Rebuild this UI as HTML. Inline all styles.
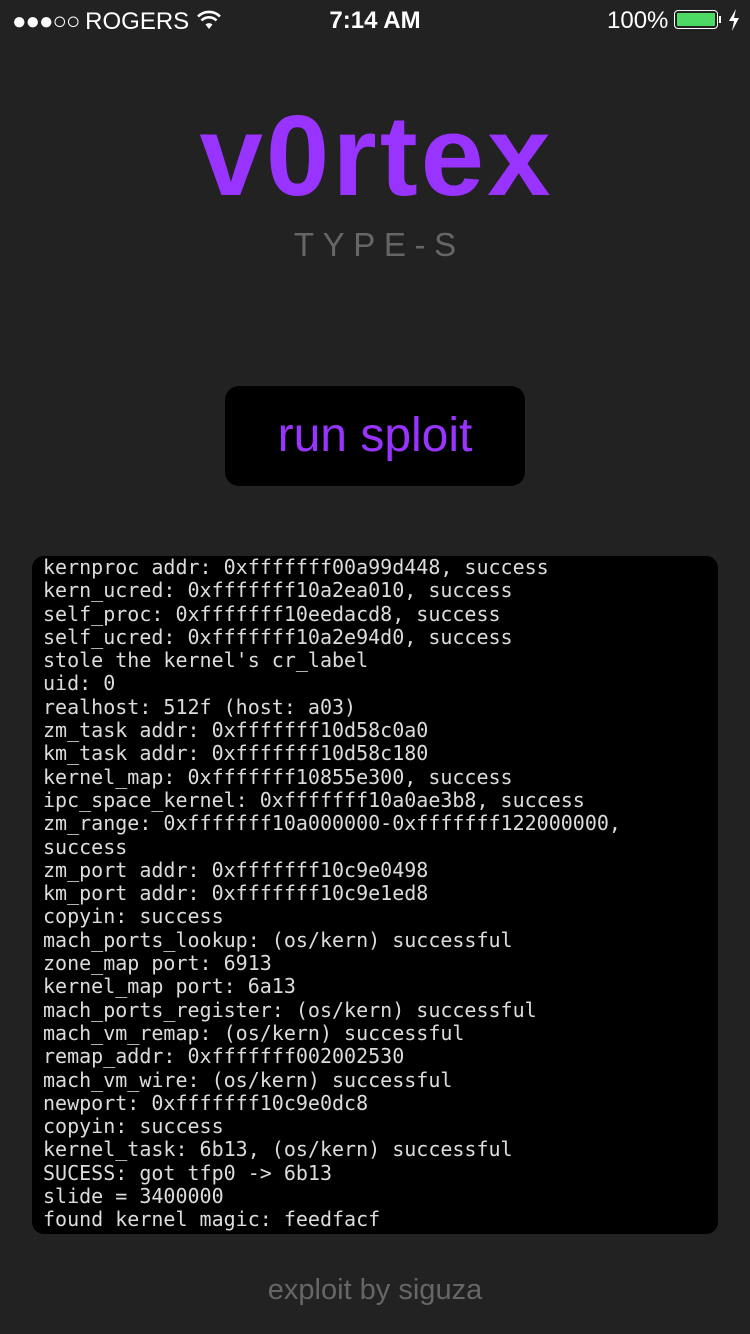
<!DOCTYPE html>
<html><head><meta charset="utf-8"><style>
body{margin:0;width:750px;height:1334px;background:#222222;position:relative;overflow:hidden;font-family:"Liberation Sans",sans-serif;color:#fff}
.sb{position:absolute;top:0;left:0;width:750px;height:40px;font-size:24px}
.title{position:absolute;top:97px;left:0;width:750px;text-align:center;font-size:114px;font-weight:bold;color:#9933ff;letter-spacing:3px;text-indent:3px;line-height:120px}
.sub{position:absolute;top:228px;left:0;width:750px;text-align:center;font-size:33px;line-height:33px;color:#666;letter-spacing:8.6px;text-indent:8.6px}
.btn{position:absolute;left:225px;top:386px;width:300px;height:100px;background:#000;border-radius:14px;color:#9933ff;font-size:48px;text-align:center;line-height:100px}
.log{position:absolute;left:32px;top:556px;width:686px;height:678px;background:#000;border-radius:12px;overflow:hidden}
.log pre{margin:0;padding:0 0 0 11px;font-family:"DejaVu Sans Mono",monospace;font-size:20px;line-height:23.3px;color:#dcdcdc;position:relative;top:0}
.foot{position:absolute;top:1274px;left:0;width:750px;text-align:center;font-size:29px;color:#666}
</style></head><body>
<div class="sb">
 <div style="position:absolute;left:12px;top:8px;font-size:24px;letter-spacing:-1px">●●●○○ <span style="letter-spacing:0">ROGERS</span></div>
 <svg style="position:absolute;left:197px;top:10px" width="24" height="20" viewBox="0 0 24 20"><path d="M12 19 L8.5 14.5 A5 5 0 0 1 15.5 14.5Z" fill="#fff"/><path d="M4.5 10.5 A10.5 10.5 0 0 1 19.5 10.5" stroke="#fff" stroke-width="2.6" fill="none"/><path d="M1 6.5 A15.5 15.5 0 0 1 23 6.5" stroke="#fff" stroke-width="2.6" fill="none"/></svg>
 <div style="position:absolute;left:0;width:750px;text-align:center;top:7px;font-weight:bold">7:14 AM</div>
 <div style="position:absolute;left:607px;top:7px">100%</div>
 <div style="position:absolute;left:674px;top:10px;width:44px;height:19px;border:1.5px solid #fff;border-radius:4px;box-sizing:border-box;padding:2px"><div style="background:#4cd964;width:100%;height:100%;border-radius:1px"></div></div>
 <div style="position:absolute;left:719px;top:16px;width:2px;height:7px;background:#fff"></div>
 <svg style="position:absolute;left:728px;top:9px" width="12" height="22" viewBox="0 0 12 22"><path d="M8 0 L1 12 H6 L4 22 L11 9 H6 Z" fill="#fff"/></svg>
</div>
<div class="title">v0rtex</div>
<div class="sub">TYPE-S</div>
<div class="btn">run sploit</div>
<div class="log"><pre>kernproc addr: 0xfffffff00a99d448, success
kern_ucred: 0xfffffff10a2ea010, success
self_proc: 0xfffffff10eedacd8, success
self_ucred: 0xfffffff10a2e94d0, success
stole the kernel's cr_label
uid: 0
realhost: 512f (host: a03)
zm_task addr: 0xfffffff10d58c0a0
km_task addr: 0xfffffff10d58c180
kernel_map: 0xfffffff10855e300, success
ipc_space_kernel: 0xfffffff10a0ae3b8, success
zm_range: 0xfffffff10a000000-0xfffffff122000000,
success
zm_port addr: 0xfffffff10c9e0498
km_port addr: 0xfffffff10c9e1ed8
copyin: success
mach_ports_lookup: (os/kern) successful
zone_map port: 6913
kernel_map port: 6a13
mach_ports_register: (os/kern) successful
mach_vm_remap: (os/kern) successful
remap_addr: 0xfffffff002002530
mach_vm_wire: (os/kern) successful
newport: 0xfffffff10c9e0dc8
copyin: success
kernel_task: 6b13, (os/kern) successful
SUCESS: got tfp0 -&gt; 6b13
slide = 3400000
found kernel magic: feedfacf</pre></div>
<div class="foot">exploit by siguza</div>
</body></html>
